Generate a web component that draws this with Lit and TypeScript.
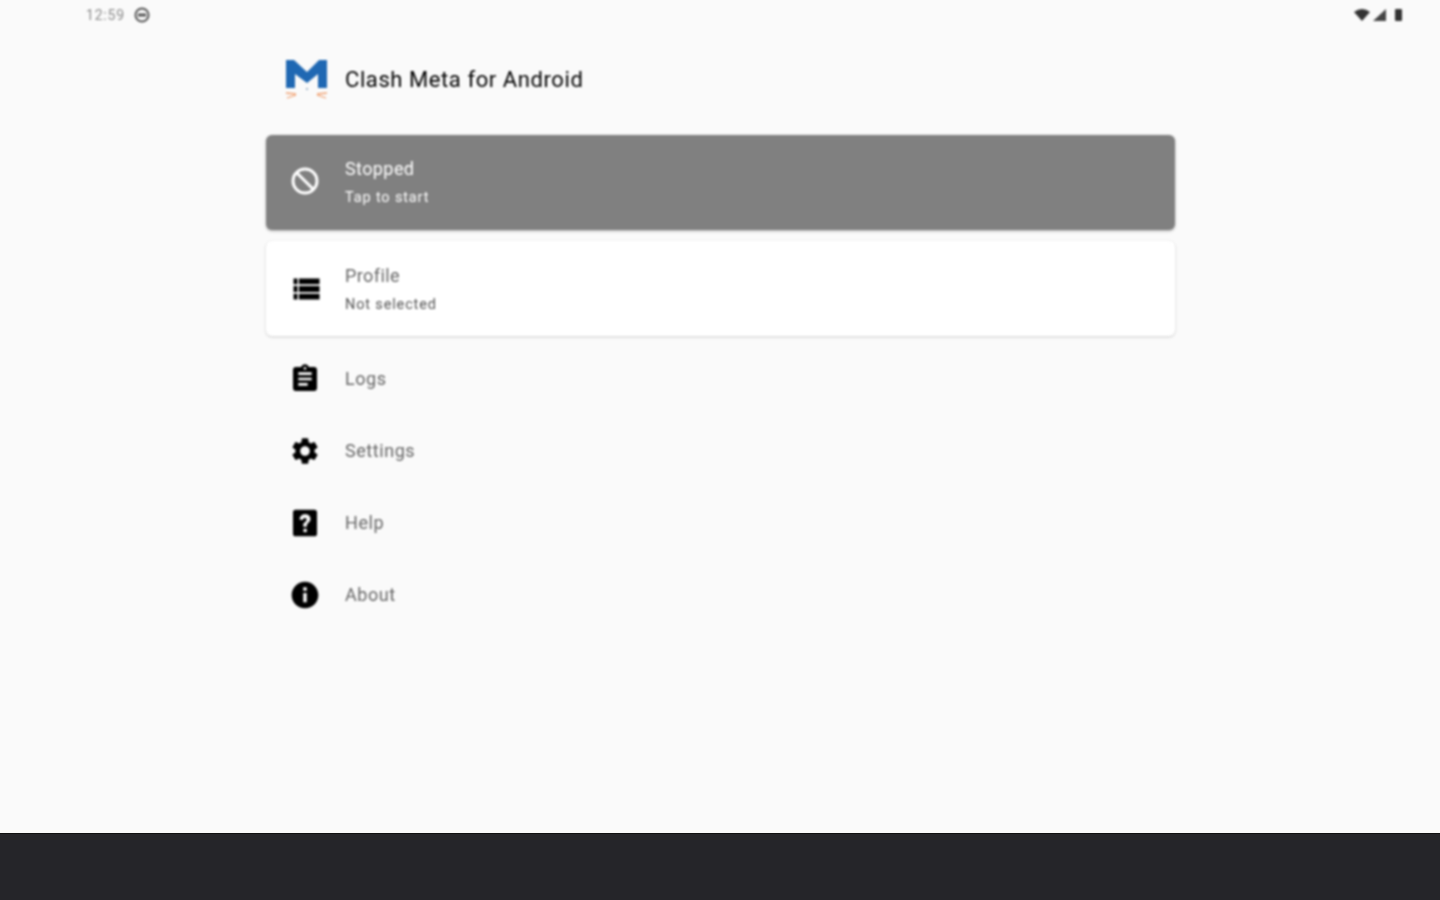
import { LitElement, html, css, svg } from "lit";
import { customElement } from "lit/decorators.js";

const icons = {
  stop: svg`<circle cx="12" cy="12" r="9" fill="none" stroke="currentColor" stroke-width="2.200"/><path d="M5.600 5.600 L18.400 18.400" fill="none" stroke="currentColor" stroke-width="2.200"/>`,
  list: svg`<path fill="currentColor" d="M3.400 4.100h3v4.400h-3zM3.400 9.800h3v4.400h-3zM3.400 15.500h3v4.400h-3zM7.500 4.100h15.400v4.400H7.500zM7.500 9.800h15.400v4.400H7.500zM7.500 15.500h15.400v4.400H7.500z"/>`,
  logs: svg`<path fill="currentColor" d="M19 3h-4.180C14.400 1.840 13.300 1 12 1s-2.400.84-2.820 2H5c-1.100 0-2 .9-2 2v14c0 1.100.9 2 2 2h14c1.100 0 2-.9 2-2V5c0-1.100-.9-2-2-2zm-7 0c.55 0 1 .45 1 1s-.45 1-1 1-1-.45-1-1 .45-1 1-1zm2 14H7v-2h7v2zm3-4H7v-2h10v2zm0-4H7V7h10v2z"/>`,
  gear: svg`<path fill="currentColor" d="M19.140 12.940c.04-.3.06-.61.06-.94 0-.32-.02-.64-.07-.94l2.030-1.580a.49.49 0 0 0 .12-.61l-1.920-3.320a.488.488 0 0 0-.59-.22l-2.390.96c-.5-.38-1.030-.7-1.620-.94l-.36-2.540a.484.484 0 0 0-.48-.41h-3.840c-.24 0-.43.17-.47.41l-.36 2.540c-.59.24-1.130.57-1.620.94l-2.390-.96c-.22-.08-.47 0-.59.22L2.740 8.870c-.12.21-.08.47.12.61l2.030 1.580c-.05.3-.09.63-.09.94s.02.64.07.94l-2.030 1.580a.49.49 0 0 0-.12.61l1.920 3.320c.12.22.37.29.59.22l2.390-.96c.5.38 1.030.7 1.620.94l.36 2.540c.05.24.24.41.48.41h3.840c.24 0 .44-.17.47-.41l.36-2.540c.59-.24 1.130-.56 1.620-.94l2.390.96c.22.08.47 0 .59-.22l1.920-3.320c.12-.22.07-.47-.12-.61l-2.010-1.580zM12 15.600c-1.980 0-3.600-1.620-3.600-3.600s1.620-3.600 3.600-3.600 3.600 1.620 3.600 3.600-1.620 3.600-3.600 3.600z"/>`,
  help: svg`<path fill="currentColor" d="M19 2H5a2 2 0 0 0-2 2v16a2 2 0 0 0 2 2h14a2 2 0 0 0 2-2V4a2 2 0 0 0-2-2zm-6.900 17a1.400 1.400 0 1 1 0-2.800 1.400 1.400 0 0 1 0 2.800zm1.300-5.200v1h-2.700v-1.400c0-2 2.500-2.300 2.500-3.900 0-.7-.5-1.200-1.300-1.200-.8 0-1.400.6-1.500 1.500L7.900 9.300C8.100 7 9.800 5.500 12.100 5.500c2.400 0 4 1.400 4 3.500 0 2.500-2.700 3-2.700 4.800z"/>`,
  info: svg`<path fill="currentColor" d="M12 2C6.480 2 2 6.480 2 12s4.480 10 10 10 10-4.480 10-10S17.520 2 12 2zm1.300 15.500h-2.600v-7h2.600v7zm0-8.700h-2.600V6.200h2.600v2.600z"/>`,
};

@customElement("app-root")
export class AppRoot extends LitElement {
  static styles = css`
    :host {
      display: flex;
      flex-direction: column;
      width: 1440px;
      height: 900px;
      overflow: hidden;
      background: #fafafa;
      font-family: Roboto, "Liberation Sans", sans-serif;
    }
    .screen {
      flex: 1;
      min-height: 0;
      display: flex;
      flex-direction: column;
    }
    .status {
      height: 30px;
      flex: none;
      display: flex;
      align-items: center;
      justify-content: space-between;
      padding: 0 36px 0 86px;
      color: #8c8c8c;
      font-size: 14px;
      letter-spacing: 0.8px;
      filter: blur(0.8px);
    }
    .status-left, .status-right { display: flex; align-items: center; }
    .status-left { gap: 6px; }
    .status-right { color: #333; }
    .clock { width: 41px; }
    .status svg { display: block; }
    .signal { margin-left: 2px; }
    .battery { margin-left: 8px; }
    .column {
      width: 910px;
      margin: 0 auto;
      padding-left: 1px;
      box-sizing: border-box;
      filter: blur(0.8px);
    }
    .header {
      height: 105px;
      display: flex;
      align-items: center;
      padding: 0 0 8px 19px;
      box-sizing: border-box;
      gap: 16px;
    }
    .logo { display: block; flex: none; }
    .app-title { font-size: 22px; color: #000; letter-spacing: 0.58px; margin-top: 2px; }
    .card {
      height: 95px;
      border-radius: 6px;
      display: flex;
      align-items: center;
      padding-left: 23px;
      gap: 24px;
      margin-bottom: 11px;
      box-sizing: border-box;
    }
    .card.stopped {
      background: #808080;
      color: #fff;
      box-shadow: 0 1px 3px rgba(0, 0, 0, 0.3);
    }
    .card.profile {
      background: #fff;
      color: #000;
      box-shadow: 0 1px 3px rgba(0, 0, 0, 0.18);
      margin-bottom: 7px;
    }
    .icon { width: 32px; height: 32px; display: block; flex: none; }
    .stop-icon { margin-top: -3px; }
    .lines { display: flex; flex-direction: column; gap: 10px; }
    .stopped .lines { margin-top: -2px; }
    .t1 { font-size: 18px; line-height: 21px; letter-spacing: 0.4px; }
    .t2 { font-size: 14.500px; line-height: 17px; letter-spacing: 0.85px; }
    .stopped .t1, .stopped .t2 { color: #fff; }
    .profile .t1 { color: #666; }
    .profile .t2 { color: #555; }
    .row {
      height: 72px;
      display: flex;
      align-items: center;
      padding-left: 23px;
      gap: 24px;
      color: #000;
    }
    .row .label { font-size: 18px; color: #666; letter-spacing: 0.55px; margin-top: -2px; }
    .nav {
      flex: none;
      height: 67px;
      background: #252529;
      border-top: 1px solid #111;
      box-sizing: border-box;
    }
  `;

  private row(icon: unknown, label: string) {
    return html`<div class="row">
      <svg class="icon" viewBox="0 0 24 24">${icon}</svg>
      <span class="label">${label}</span>
    </div>`;
  }

  render() {
    return html`
      <div class="screen">
        <div class="status">
          <div class="status-left">
            <span class="clock">12:59</span>
            <svg width="18" height="18" viewBox="0 0 18 18">
              <circle cx="9" cy="9" r="6.500" fill="none" stroke="#555" stroke-width="2"/>
              <rect x="5" y="7.500" width="8" height="3" fill="#555"/>
            </svg>
          </div>
          <div class="status-right">
            <svg width="16" height="14" viewBox="0 0 16 14"><path fill="#333" d="M0 4 Q8 -2 16 4 L8 13 Z"/></svg>
            <svg class="signal" width="14" height="14" viewBox="0 0 14 14"><path fill="#444" d="M1 13 L14 1 V13 Z"/></svg>
            <svg class="battery" width="10" height="14" viewBox="0 0 10 14"><rect x="1" y="1" width="7" height="12" rx="1" fill="#333"/></svg>
          </div>
        </div>
        <div class="column">
          <div class="header">
            <svg class="logo" width="44" height="44" viewBox="0 0 44 44">
              <path fill="#1f68b3" d="M1 3 H9 L22 15 L34 3 H42 V31 H33 V17 L22 26 L10 17 V31 H1 Z"/>
              <circle cx="22" cy="32" r="1" fill="#8aa4bf"/>
              <path fill="none" stroke="#f0a070" stroke-width="1.300" d="M1 36 L11 37 M2 41 L11 38 M42 36 L32 37 M41 41 L32 38"/>
            </svg>
            <span class="app-title">Clash Meta for Android</span>
          </div>
          <div class="card stopped">
            <svg class="icon stop-icon" viewBox="0 0 24 24">${icons.stop}</svg>
            <div class="lines"><span class="t1">Stopped</span><span class="t2">Tap to start</span></div>
          </div>
          <div class="card profile">
            <svg class="icon" viewBox="0 0 24 24">${icons.list}</svg>
            <div class="lines"><span class="t1">Profile</span><span class="t2">Not selected</span></div>
          </div>
          ${this.row(icons.logs, "Logs")}
          ${this.row(icons.gear, "Settings")}
          ${this.row(icons.help, "Help")}
          ${this.row(icons.info, "About")}
        </div>
      </div>
      <div class="nav"></div>
    `;
  }
}
